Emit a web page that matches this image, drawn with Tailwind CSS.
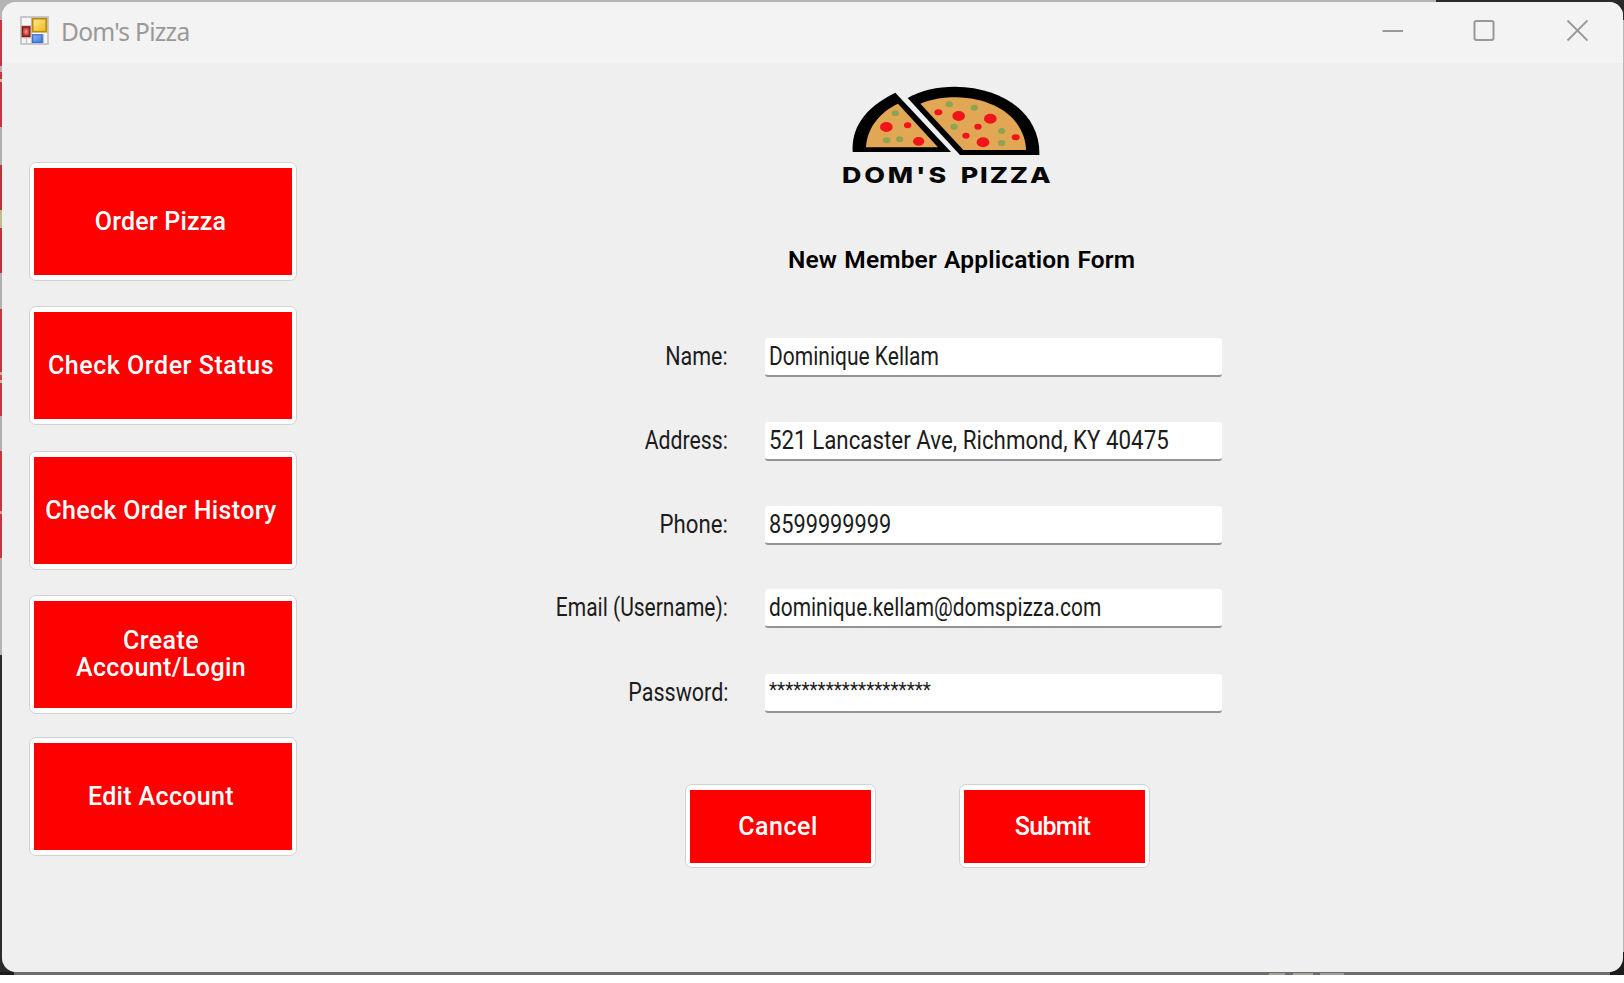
<!DOCTYPE html>
<html lang="en">
<head>
<meta charset="utf-8">
<title>Dom's Pizza</title>
<script src="https://cdn.jsdelivr.net/npm/@tailwindcss/browser@4"></script>
</head>
<body class="bg-white w-[1624px] h-[983px] overflow-hidden font-['Roboto',sans-serif]">
<div class="relative w-[1624px] h-[975px] pt-[2px] pl-[2px] pr-px pb-[3px] bg-[#6e6e6e] overflow-hidden">
  <!-- desktop behind the window -->
  <div class="absolute inset-0 flex flex-col">
    <div class="flex h-[20px]"><div class="w-[1436px] bg-[#b4b4b4]"></div><div class="flex-1 bg-[#2c2a29]"></div></div>
    <div class="flex flex-1 justify-between">
      <div class="w-[12px] flex flex-col">
        <div class="h-[46px] bg-[#c9353b]"></div><div class="h-[6px] bg-[#c3a9b8]"></div><div class="h-[7px] bg-[#c9353b]"></div><div class="h-[3px] bg-[#c8b9bd]"></div>
        <div class="h-[45px] bg-[#c9353b]"></div><div class="h-[38px] bg-[#b0b0b0]"></div><div class="h-[45px] bg-[#c03238]"></div><div class="h-[18px] bg-[#c0bd8c]"></div>
        <div class="h-[45px] bg-[#c03238]"></div><div class="h-[36px] bg-[#b0b0b0]"></div><div class="h-[63px] bg-[#c9353b]"></div><div class="h-[3px] bg-[#b9b59c]"></div><div class="h-[5px] bg-[#c0503c]"></div><div class="h-[3px] bg-[#c5c0ae]"></div>
        <div class="h-[33px] bg-[#c9353b]"></div><div class="h-[35px] bg-[#b0b0b0]"></div><div class="h-[60px] bg-[#c9353b]"></div><div class="h-[3px] bg-[#d0a0a0]"></div><div class="h-[44px] bg-[#c9353b]"></div>
        <div class="h-[97px] bg-[#b4b4b4]"></div><div class="flex-1 bg-[#2b2b2b]"></div>
      </div>
      <div class="w-[12px] flex flex-col"><div class="flex-1 bg-[#b8b8b8]"></div><div class="h-[20px] bg-[#1c1c1c]"></div></div>
    </div>
    <div class="h-[3px] bg-[#6e6e6e] flex"><div class="w-[14px] bg-[#1c1c1c]"></div><div class="w-[1255px]"></div><div class="w-[16px] mt-px bg-[#a8a098]"></div><div class="w-[8px]"></div><div class="w-[20px] mt-px bg-[#a5a5a0]"></div><div class="w-[7px]"></div><div class="w-[24px] mt-px bg-[#a09ca0]"></div><div class="flex-1"></div><div class="w-[14px] bg-[#1c1c1c]"></div></div>
  </div>

  <!-- application window -->
  <div class="relative flex flex-col w-[1621px] h-[970px] rounded-[14px] bg-[#efefef] overflow-hidden">
    <header class="h-[61px] shrink-0 bg-[#f3f3f3] flex items-start">
      <svg class="ml-[18px] mt-[14px]" width="29" height="29" viewBox="0 0 29 29">
        <rect x="1" y="1" width="27" height="27" fill="#f6f6f6" stroke="#bdbdbd" stroke-width="1.6"/>
        <path d="M11.5 1v27M1 10h10M1 21.500h10M6.500 21.500v6M23.500 18v10" stroke="#c4c4c4" stroke-width="1.3"/>
        <defs>
          <linearGradient id="y" x2="1" y2="1"><stop stop-color="#ffe9a0"/><stop offset="1" stop-color="#f2b70d"/></linearGradient>
          <linearGradient id="b" x2="1" y2="1"><stop stop-color="#8fbcff"/><stop offset="1" stop-color="#3a76dc"/></linearGradient>
          <radialGradient id="r"><stop stop-color="#ee9a92"/><stop offset="1" stop-color="#b3281c"/></radialGradient>
        </defs>
        <rect x="12.700" y="2.700" width="13.600" height="13" fill="url(#y)" stroke="#b98c0c" stroke-width="1.700"/>
        <rect x="2.300" y="10.800" width="7.600" height="9.600" fill="url(#r)" stroke="#8f1c14" stroke-width="1.400"/>
        <rect x="12.600" y="18.800" width="9.600" height="7.600" fill="url(#b)" stroke="#3b6fd0" stroke-width="1.300"/>
      </svg>
      <span class="ml-[12px] mt-[12px] w-[160px] whitespace-nowrap text-[24.5px] leading-[36px] tracking-[-0.7px] text-[#999] font-['Noto_Sans',sans-serif]">Dom's Pizza</span>
      <svg class="ml-auto mr-[35px] mt-[16px]" width="206" height="24" viewBox="0 0 206 24" fill="none" stroke="#999" stroke-width="2">
        <path d="M.5 13H21"/>
        <rect x="92.500" y="2.900" width="19" height="19" rx="1.800"/>
        <path d="M185.500 2.500l20 20M205.500 2.500l-20 20" stroke-width="1.900"/>
      </svg>
    </header>

    <main class="flex flex-1">
      <nav class="w-[295px] pl-[27px] pt-[99px] flex flex-col text-white font-medium text-[25px] leading-[27px] text-center [&_button]:w-[268px] [&_button]:h-[119px] [&_button]:shrink-0 [&_button]:rounded-[7px] [&_button]:border-[1.5px] [&_button]:border-[#d2d2d2] [&_button]:bg-white [&_button]:p-[4px] [&_button]:pt-[5px] [&_button]:pb-[5px] [&_button>div]:bg-[#fe0000] [&_button>div]:h-full [&_button>div]:flex [&_button>div]:items-center [&_button>div]:justify-center [&_button>div]:whitespace-nowrap">
        <button><div><span class="pr-[5px] tracking-[0.2px]">Order Pizza</span></div></button>
        <button class="mt-[25px]"><div><span class="pr-[4px] tracking-[0.55px]">Check Order Status</span></div></button>
        <button class="mt-[26px]"><div><span class="pr-[4px] tracking-[0.35px]">Check Order History</span></div></button>
        <button class="mt-[25px]"><div><span class="pr-[4px] pb-px tracking-[0.4px]">Create<br>Account/Login</span></div></button>
        <button class="mt-[23px]"><div><span class="pr-[4px] tracking-[0.35px]">Edit Account</span></div></button>
      </nav>

      <section class="flex-1 flex flex-col">
        <svg class="ml-[523px] mt-[7px] shrink-0" width="260" height="130" viewBox="0 0 780 390">
          <path d="M98 246C94 178 128 116 226 68L393 246Z" fill="#000"/>
          <path d="M138 232C140 178 176 128 234 101L354 232Z" fill="#e2a755"/>
          <path d="M263 84C305 60 350 50 405 50C560 52 662 140 658 255H420Z" fill="#000"/>
          <path d="M301 101C340 86 370 82 408 82C530 84 616 150 618 240H430Z" fill="#e2a755"/>
          <g fill="#f2141b">
            <ellipse cx="199" cy="171" rx="19" ry="15"/><ellipse cx="263" cy="166" rx="11" ry="9"/><ellipse cx="296" cy="214" rx="17" ry="13"/>
            <ellipse cx="355" cy="127" rx="12" ry="9"/><ellipse cx="416" cy="138" rx="19" ry="15"/><ellipse cx="511" cy="146" rx="19" ry="15"/>
            <ellipse cx="474" cy="170" rx="11" ry="9"/><ellipse cx="438" cy="197" rx="11" ry="9"/><ellipse cx="489" cy="217" rx="19" ry="15"/><ellipse cx="587" cy="202" rx="12" ry="9"/>
          </g>
          <g fill="#8ba552">
            <ellipse cx="226" cy="130" rx="11" ry="9"/><ellipse cx="200" cy="211" rx="11" ry="9"/><ellipse cx="239" cy="208" rx="11" ry="9"/>
            <ellipse cx="388" cy="103" rx="11" ry="9"/><ellipse cx="463" cy="113" rx="11" ry="9"/><ellipse cx="402" cy="170" rx="11" ry="9"/><ellipse cx="545" cy="183" rx="11" ry="9"/><ellipse cx="545" cy="219" rx="11" ry="9"/>
          </g>
          <g font-family="Inter, sans-serif" font-weight="800" font-size="66" fill="#080808">
            <text transform="translate(66 340) scale(1.22 1)" textLength="256" lengthAdjust="spacing">DOM'S</text>
            <text transform="translate(422 340) scale(1.22 1)" textLength="221" lengthAdjust="spacing">PIZZA</text>
          </g>
        </svg>

        <h1 class="ml-[491px] mt-[43px] h-[34px] leading-[34px] text-[24.5px] font-semibold text-black whitespace-nowrap tracking-[0.15px] [word-spacing:1px]">New Member Application Form</h1>

        <form class="mt-[61px] flex flex-col text-[25px] leading-[38px] text-[#1c1c1c] [&_label]:w-[431px] [&_label]:text-right [&_label]:mr-[37px] [&_label]:h-[36px] [&_label>span]:inline-block [&_label>span]:origin-right [&_p]:w-[457px] [&_p]:h-[39px] [&_p]:bg-white [&_p]:border-b-2 [&_p]:border-[#949494] [&_p]:rounded-[3px] [&_p]:pl-[4px] [&_p]:whitespace-nowrap [&_p>span]:inline-block [&_p>span]:origin-left">
          <div class="flex"><label><span class="scale-x-[0.86]">Name:</span></label><p><span class="scale-x-[0.84]">Dominique Kellam</span></p></div>
          <div class="flex mt-[45px]"><label><span class="scale-x-[0.85]">Address:</span></label><p><span class="scale-x-[0.893]">521 Lancaster Ave, Richmond, KY 40475</span></p></div>
          <div class="flex mt-[45px]"><label><span class="scale-x-[0.89]">Phone:</span></label><p><span class="scale-x-[0.87]">8599999999</span></p></div>
          <div class="flex mt-[44px]"><label><span class="scale-x-[0.84]">Email (Username):</span></label><p><span class="scale-x-[0.836]">dominique.kellam@domspizza.com</span></p></div>
          <div class="flex mt-[46px]"><label><span class="scale-x-[0.86]">Password:</span></label><p class="leading-[30px]"><span class="text-[20px] scale-x-[0.94]">********************</span></p></div>
        </form>

        <div class="mt-[71px] ml-[388px] flex gap-[83px] text-white font-medium text-[25px] [&_button]:w-[191px] [&_button]:h-[84px] [&_button]:rounded-[7px] [&_button]:border-[1.5px] [&_button]:border-[#d2d2d2] [&_button]:bg-white [&_button]:p-[4px] [&_button]:pt-[5px] [&_button>div]:bg-[#fe0000] [&_button>div]:h-full [&_button>div]:flex [&_button>div]:items-center [&_button>div]:justify-center">
          <button><div><span class="pr-[5px] tracking-[0.5px]">Cancel</span></div></button>
          <button><div><span class="pr-[4px] tracking-[-0.7px]">Submit</span></div></button>
        </div>
      </section>
    </main>
  </div>
</div>
</body>
</html>
